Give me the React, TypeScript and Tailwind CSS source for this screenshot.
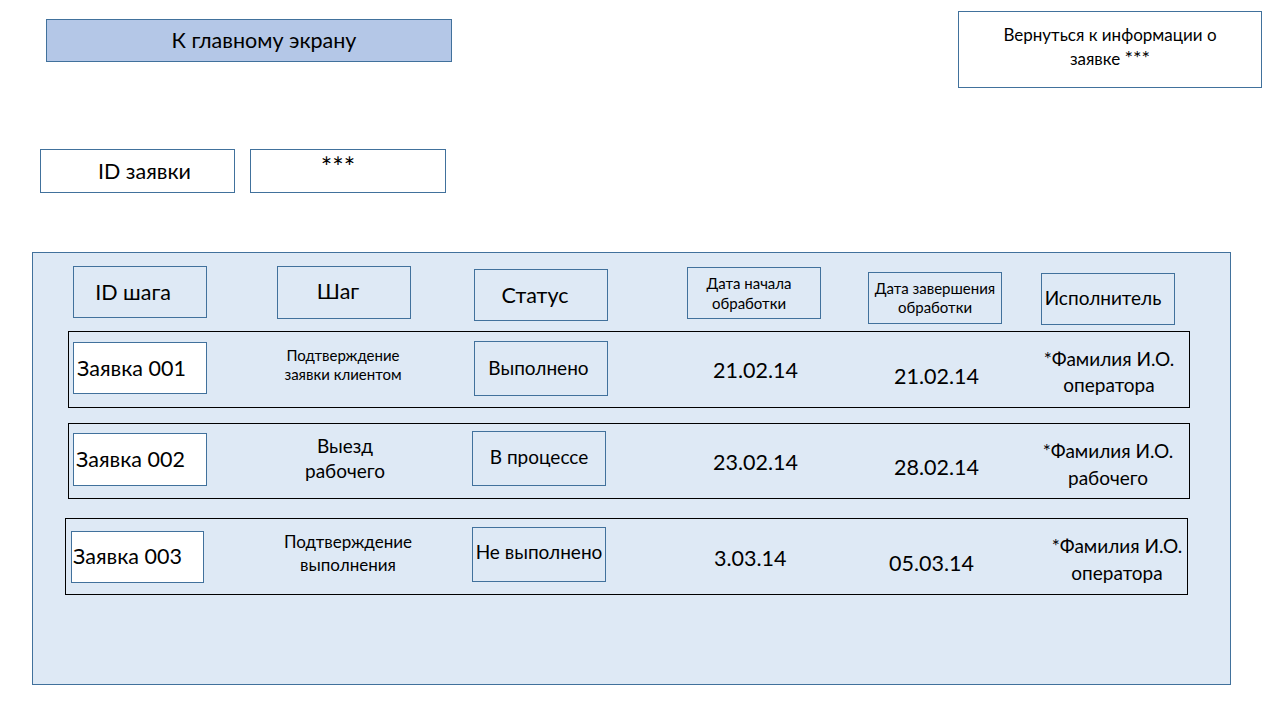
import React from 'react';

const blueBox = 'box-border border border-[#41719c] flex items-center justify-center text-center';

const headers = [
  { label: 'ID шага', cls: 'ml-[40px] mt-0 h-[52px] text-[21.5px] pr-[14px]' },
  { label: 'Шаг', cls: 'ml-[70px] mt-0 h-[53px] text-[21.5px] pb-[2px] pr-[12px]' },
  { label: 'Статус', cls: 'ml-[63px] mt-[3px] h-[52px] text-[21.5px] pr-[12px]' },
  { label: 'Дата начала обработки', cls: 'ml-[79px] mt-[1px] h-[52px] text-[15px] leading-[20px] pl-[14px] pr-[24px]' },
  { label: 'Дата завершения обработки', cls: 'ml-[47px] mt-[6px] h-[52px] text-[15px] leading-[19px] px-[4px]' },
  { label: 'Исполнитель', cls: 'ml-[39px] mt-[7px] h-[52px] text-[19px] pb-[2px] pr-[10px]' },
];

const App = () => {
  return (
    <div className="w-[1280px] h-[720px] bg-white text-black overflow-hidden" style={{ fontFamily: 'Lato, "Open Sans", sans-serif' }}>

      {/* Top buttons */}
      <div className="flex items-start">
        <div className="ml-[46px] mt-[19px] w-[406px] h-[43px] box-border border border-[#41719c] bg-[#b4c7e7] flex items-center justify-center text-[21.5px] pb-[1px] pl-[30px]">
          К главному экрану
        </div>
        <div className="ml-auto mr-[18px] mt-[11px] w-[304px] h-[77px] box-border border border-[#41719c] bg-white flex items-center justify-center text-center text-[17px] leading-[22px] pb-[6px]">
          <p>Вернуться к информации о<br />заявке <span className="text-[20px]">***</span></p>
        </div>
      </div>

      {/* ID заявки */}
      <div className="flex ml-[40px] mt-[61px] gap-[15px]">
        <div className="w-[195px] h-[44px] box-border border border-[#41719c] flex items-center justify-center pl-[14px] text-[21.5px]">ID заявки</div>
        <div className="w-[196px] h-[44px] box-border border border-[#41719c] flex items-center justify-center text-[27px] pb-[8px] pr-[20px]">***</div>
      </div>

      {/* Table panel */}
      <div className="ml-[32px] mt-[59px] w-[1199px] h-[433px] box-border border border-[#41719c] bg-[#dee9f5] pt-[13px]">

        <div className="flex items-start">
          {headers.map((h) => (
            <div key={h.label} className={`${blueBox} w-[134px] ${h.cls}`}>{h.label}</div>
          ))}
        </div>

        {/* Row 1 */}
        <div className="ml-[35px] mt-[6px] w-[1122px] h-[77px] box-border border border-black flex items-start">
          <div className="ml-[4px] mt-[10px] w-[134px] h-[52px] box-border border border-[#41719c] bg-white flex items-center pl-[3px] text-[21.5px]">Заявка 001</div>
          <div className="ml-[56px] mt-[14px] w-[160px] text-center text-[15px] leading-[19px]">Подтверждение<br />заявки клиентом</div>
          <div className={`${blueBox} ml-[51px] mt-[9px] w-[134px] h-[55px] text-[19px] pr-[5px]`}>Выполнено</div>
          <div className="ml-[105px] mt-[25px] w-[90px] text-[21.5px] leading-[26px]">21.02.14</div>
          <div className="ml-[91px] mt-[31px] w-[90px] text-[21.5px] leading-[26px]">21.02.14</div>
          <div className="ml-[50px] mt-[14px] w-[150px] text-center text-[19px] leading-[26px] whitespace-nowrap">*Фамилия И.О.<br />оператора</div>
        </div>

        {/* Row 2 */}
        <div className="ml-[35px] mt-[15px] w-[1122px] h-[76px] box-border border border-black flex items-start">
          <div className="ml-[4px] mt-[9px] w-[134px] h-[53px] box-border border border-[#41719c] bg-white flex items-center pl-[2px] text-[21.5px]">Заявка 002</div>
          <div className="ml-[58px] mt-[9px] w-[160px] text-center text-[19px] leading-[25px]">Выезд<br />рабочего</div>
          <div className={`${blueBox} ml-[47px] mt-[7px] w-[134px] h-[55px] text-[19px] pb-[2px]`}>В процессе</div>
          <div className="ml-[107px] mt-[25px] w-[90px] text-[21.5px] leading-[26px]">23.02.14</div>
          <div className="ml-[91px] mt-[30px] w-[90px] text-[21.5px] leading-[26px]">28.02.14</div>
          <div className="ml-[49px] mt-[13px] w-[150px] text-center text-[19px] leading-[27px] whitespace-nowrap">*Фамилия И.О.<br />рабочего</div>
        </div>

        {/* Row 3 */}
        <div className="ml-[32px] mt-[19px] w-[1123px] h-[77px] box-border border border-black flex items-start">
          <div className="ml-[5px] mt-[12px] w-[133px] h-[52px] box-border border border-[#41719c] bg-white flex items-center pl-[1px] text-[21.5px] pb-[2px]">Заявка 003</div>
          <div className="ml-[64px] mt-[11px] w-[160px] text-center text-[17px] leading-[23px]">Подтверждение<br />выполнения</div>
          <div className={`${blueBox} ml-[44px] mt-[8px] w-[134px] h-[55px] text-[19px] pb-[4px] whitespace-nowrap`}>Не выполнено</div>
          <div className="ml-[108px] mt-[26px] w-[90px] text-[21.5px] leading-[26px]">3.03.14</div>
          <div className="ml-[85px] mt-[31px] w-[90px] text-[21.5px] leading-[26px]">05.03.14</div>
          <div className="ml-[68px] mt-[13px] w-[140px] text-center text-[19px] leading-[27px] whitespace-nowrap">*Фамилия И.О.<br />оператора</div>
        </div>
      </div>
    </div>
  );
};

export default App;
